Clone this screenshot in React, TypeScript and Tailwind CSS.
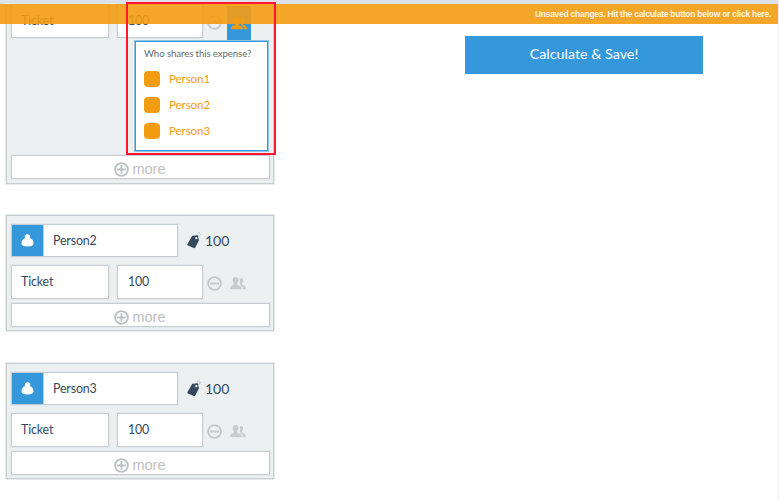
import React from "react";

const box = "border border-[#c6ced1] bg-white shadow-[0_0_0_1px_#e4e8ea]";

function PeopleIcon({ color }: { color: string }) {
  return (
    <svg width="16" height="13" viewBox="0 0 16 13" fill={color} className="block">
      <path d="M9.300 1.600C10.600.3 13.200 1 13.200 3.200c0 1.300-.5 2.100-1.200 2.900 0 1.500.6 1.700 1.800 2.300C15.200 9 15.800 9.900 16 12.300h-3.300c-.5-2-1.200-2.800-2.700-3.500.2-.7.200-1.700-.3-2.800.3-1.600.4-2.900-.4-4.400z" />
      <path d="M5.500 0C7.500 0 8.700 1.200 8.600 3.200 8.500 4.600 7.900 5.500 7.300 6.200c-.1 1.300.3 1.800 1.600 2.300 2.100.8 2.600 1.500 2.800 3.800H0c.1-2.300.7-3 2.500-3.800C3.700 8 4 7.500 3.900 6.200 3.200 5.500 2.600 4.500 2.600 3.200 2.500 1.200 3.600 0 5.500 0z" />
      <path d="M9 1.200C9.800 3 9.600 4.400 8.900 6.400c-.1.900.3 1.200 1.300 1.600 1.300.6 2 1.300 2.400 3" fill="none" stroke={color === "#f39c12" ? "#3498db" : "#ecf0f1"} strokeWidth=".7" />
    </svg>
  );
}

function MinusIcon() {
  return (
    <svg width="15" height="15" viewBox="0 0 15 15" fill="none" stroke="#c7c9ca" strokeWidth="1.900" className="block">
      <circle cx="7.500" cy="7.500" r="6.400" />
      <path d="M3 7.500h9" />
    </svg>
  );
}

function MoreButton() {
  return (
    <div className={`flex h-[24px] w-[259px] items-center justify-center gap-[4px] pr-[2px] ${box}`}>
      <svg width="15" height="15" viewBox="0 0 15 15" fill="none" stroke="#bcc1c5" strokeWidth="1.900" className="mt-[4px] block">
        <circle cx="7.500" cy="7.500" r="6.400" />
        <path d="M3.200 7.500h8.600M7.500 3.200v8.600" />
      </svg>
      <span className="mt-[4px] font-['Liberation_Sans',sans-serif] text-[14.400px] leading-[16px] text-[#bbc0c4]">more</span>
    </div>
  );
}

function ExpenseRow({ active = false }: { active?: boolean }) {
  return (
    <div className="flex h-[34px] items-center">
      <div className={`h-[34px] w-[98px] pl-[9px] text-[12.400px] leading-[32px] tracking-[-0.140px] ${box}`}>Ticket</div>
      <div className={`ml-[8px] h-[34px] w-[86px] pl-[10px] text-[12.400px] leading-[32px] tracking-[-0.140px] ${box}`}>100</div>
      <div className="ml-[4px] mt-[2px]"><MinusIcon /></div>
      <div className={`ml-[5px] flex h-[35px] w-[24px] items-center justify-center ${active ? "mt-[5px] bg-[#3498db]" : "mt-[2px] pr-[2px]"}`}>
        <PeopleIcon color={active ? "#f39c12" : "#c9cccd"} />
      </div>
    </div>
  );
}

function PersonCard({ name, top }: { name: string; top: string }) {
  return (
    <section className={`h-[116px] w-[268px] border border-[#c6ced1] bg-[#ecf0f1] pl-[4px] pt-[8px] shadow-[0_0_0_1px_#e9eced] ${top}`}>
      <div className="flex h-[33px] items-center">
        <div className={`flex h-[33px] w-[167px] ${box}`}>
          <div className="flex h-[31px] w-[31px] items-center justify-center bg-[#3498db]">
            <svg width="13" height="13" viewBox="0 0 13 13" fill="white" className="block">
              <circle cx="6.500" cy="2.900" r="2.700" />
              <path d="M3.700 4.200C1.500 5.200.5 6.800.5 9.200c0 2.300 2 3.300 6 3.300s6-1 6-3.300c0-2.400-1-4-3.200-5-1.100 1.500-4.500 1.500-5.600 0z" />
            </svg>
          </div>
          <span className="border-l border-[#c6ced1] pl-[9px] text-[12.400px] leading-[32px] tracking-[-0.140px]">{name}</span>
        </div>
        <svg width="14" height="17" viewBox="0 0 14 17" className="ml-[9px] block">
          <path d="M9.500 4.500C9 2.200 11.200.4 12.700 1.200c1.400.9.5 2.800-1.600 3.600" fill="none" stroke="#aab3b9" strokeWidth="1" strokeDasharray="1.500 .7" />
          <path fillRule="evenodd" fill="#34495e" d="M5.300 3.800 10.700 3.200l1.300 5-3.700 7.300c-.3.600-.8.800-1.500.5L.9 13.400c-.6-.3-.7-.8-.4-1.400zm4 1.100a1.200 1.200 0 1 0 0 2.400 1.200 1.200 0 0 0 0-2.400z" />
        </svg>
        <span className="ml-[4px] text-[14px] leading-[20px]">100</span>
      </div>
      <div className="mt-[8px]"><ExpenseRow /></div>
      <div className="mt-[4px]"><MoreButton /></div>
    </section>
  );
}

function SharePopover() {
  return (
    <div className="absolute left-[135px] top-[41px] h-[110px] w-[133px] border border-[#3498db] bg-white pl-[8px] pt-[4px] shadow-[0_0_0_1px_#91c5e9]">
      <div className="whitespace-nowrap text-[9.700px] leading-[15px] tracking-[-0.120px] text-[#666b70]">Who shares this expense?</div>
      <div className="mt-[10px] flex flex-col gap-[10px]">
        {["Person1", "Person2", "Person3"].map((name) => (
          <div key={name} className="flex h-[16px] items-center gap-[9px]">
            <span className="size-[16px] rounded-[4px] bg-[#f39c12]" />
            <span className="text-[11.600px] leading-[16px] tracking-[-0.100px] text-[#f39c12]">{name}</span>
          </div>
        ))}
      </div>
    </div>
  );
}

export default function App() {
  return (
    <div className="relative h-[500px] w-[779px] overflow-hidden border-r border-[#eeeeef] bg-white font-[Lato,sans-serif] text-[#34495e]">
      <div className="h-[4px] bg-[#dfe1ea]" />
      <main className="flex">
        <div className="w-[268px] ml-[6px]">
          <section className="h-[180px] w-[268px] border border-t-0 border-[#c6ced1] bg-[#ecf0f1] pl-[4px] shadow-[0_0_0_1px_#e9eced]">
            <ExpenseRow active />
            <div className="mt-[117px]"><MoreButton /></div>
          </section>
          <PersonCard name="Person2" top="mt-[31px]" />
          <PersonCard name="Person3" top="mt-[32px]" />
        </div>
        <button className="ml-[191px] mt-[32px] h-[38px] w-[238px] bg-[#3498db] pb-[2px] text-[14.300px] leading-[36px] text-white">Calculate &amp; Save!</button>
      </main>
      <SharePopover />
      <div className="absolute left-0 top-[4px] h-[20px] w-full bg-[#f39c12]/90 pr-[7px] text-right font-['Liberation_Sans',sans-serif] text-[8.500px] font-bold leading-[20px] tracking-[-0.260px] text-white/85">
        Unsaved changes. Hit the calculate button below or click here.
      </div>
      <div className="absolute left-[126px] top-[2px] h-[153px] w-[150px] border-2 border-[#ff172f]" />
    </div>
  );
}
